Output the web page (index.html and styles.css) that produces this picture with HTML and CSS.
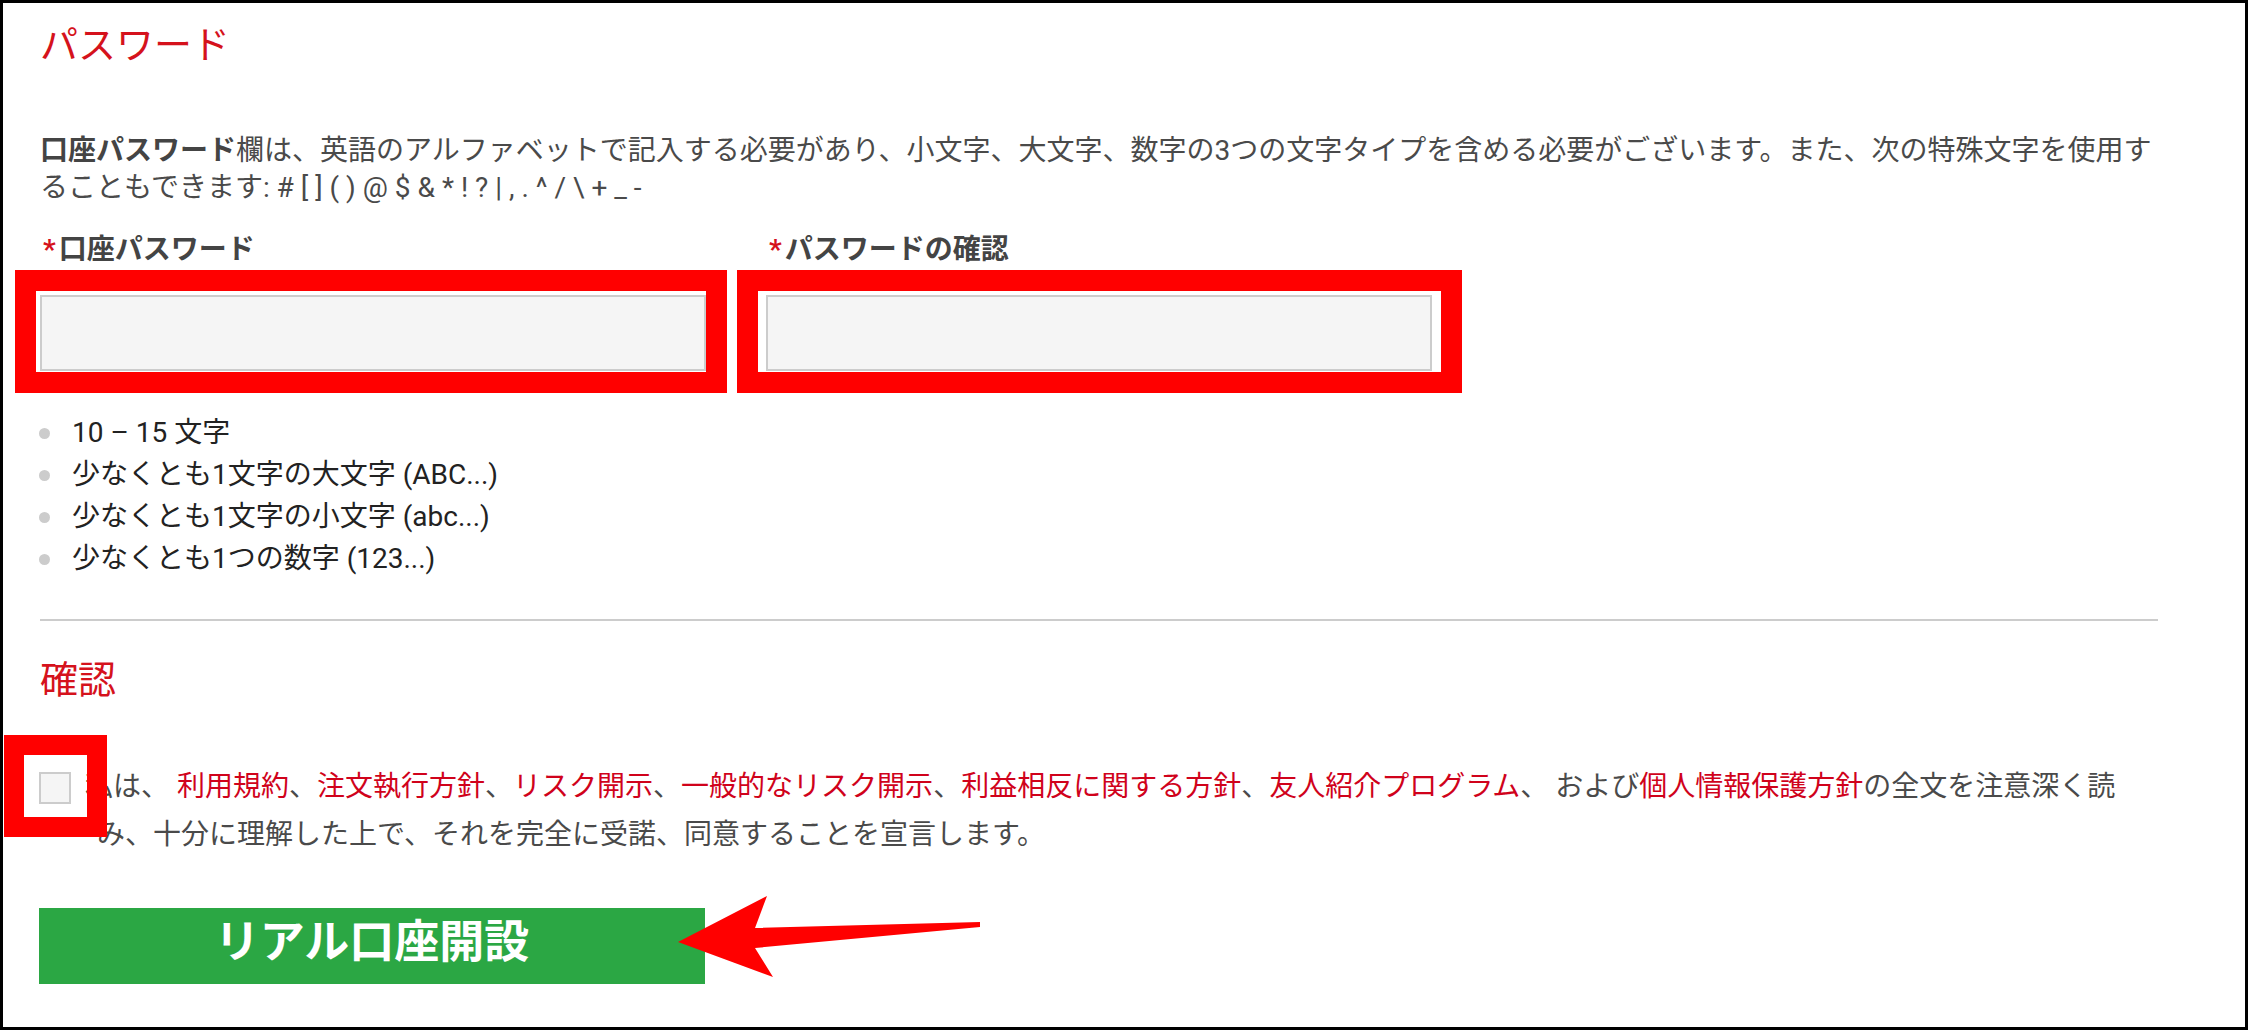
FILE: index.html
```html
<!DOCTYPE html>
<html lang="ja">
<head>
<meta charset="utf-8">
<title>パスワード</title>
<link rel="stylesheet" href="styles.css">
</head>
<body>
<main class="page">
  <h2 class="section-title">パスワード</h2>
  <p class="intro"><strong>口座パスワード</strong>欄は、英語のアルファベットで記入する必要があり、小文字、大文字、数字の3つの文字タイプを含める必要がございます。また、次の特殊文字を使用することもできます: # [ ] ( ) @ $ &amp; * ! ? | , . ^ / \ + _ -</p>

  <div class="fields">
    <div class="field">
      <label class="field-label"><span class="req">*</span>口座パスワード</label>
      <div class="input-wrap">
        <input type="password" class="pw">
        <span class="mark mark-pw1"></span>
      </div>
    </div>
    <div class="field">
      <label class="field-label"><span class="req">*</span>パスワードの確認</label>
      <div class="input-wrap">
        <input type="password" class="pw">
        <span class="mark mark-pw2"></span>
      </div>
    </div>
  </div>

  <ul class="rules">
    <li>10 – 15 文字</li>
    <li>少なくとも1文字の大文字 (ABC...)</li>
    <li>少なくとも1文字の小文字 (abc...)</li>
    <li>少なくとも1つの数字 (123...)</li>
  </ul>

  <hr class="divider">

  <h2 class="section-title confirm-title">確認</h2>

  <div class="agree">
    <div class="cb-wrap">
      <input type="checkbox" class="cb">
      <span class="mark mark-cb"></span>
    </div>
    <p class="agree-text"><span class="lead">私は、</span><a class="doc">利用規約</a>、<a class="doc">注文執行方針</a>、<a class="doc">リスク開示</a>、<a class="doc">一般的なリスク開示</a>、<a class="doc">利益相反に関する方針</a>、<a class="doc">友人紹介プログラム</a>、 および<a class="doc">個人情報保護方針</a>の全文を注意深く読み、十分に理解した上で、それを完全に受諾、同意することを宣言します。</p>
  </div>

  <div class="submit-row">
    <button class="submit" type="button">リアル口座開設</button>
    <svg class="arrow" width="320" height="100" viewBox="0 0 320 100" aria-hidden="true">
      <polygon points="8,54 97,8 85,40 310,34 310,39 85,60 103,89" fill="#ff0000"/>
    </svg>
  </div>
</main>
</body>
</html>
```

FILE: styles.css
```css
* {
  box-sizing: border-box;
}

html, body {
  margin: 0;
  padding: 0;
}

body {
  width: 2248px;
  height: 1030px;
  border: 3px solid #000;
  overflow: hidden;
  background: #fff;
  font-family: Roboto, "Noto Sans CJK JP", sans-serif;
  color: #4a4a4a;
}

.page {
  padding: 19px 87px 0 37px;
}

.section-title {
  margin: 0;
  font-size: 38px;
  line-height: 46px;
  font-weight: 400;
  color: #d5121c;
}

.intro {
  margin: 64px 0 0;
  font-size: 28px;
  line-height: 37px;
  color: #4a4a4a;
}

.intro strong {
  font-weight: 700;
  color: #444;
}

.fields {
  margin-top: 26px;
  display: grid;
  grid-template-columns: repeat(3, 666px);
  column-gap: 60px;
}

.field-label {
  display: block;
  font-size: 28px;
  line-height: 36px;
  font-weight: 700;
  color: #444;
  margin-bottom: 27px;
  padding-left: 3px;
}

.req {
  color: #d5121c;
  margin-right: 3px;
}

.input-wrap {
  position: relative;
}

.pw {
  display: block;
  width: 100%;
  height: 76px;
  margin: 0;
  border: 2px solid #cccccc;
  background: #f5f5f5;
  border-radius: 0;
}

.mark {
  position: absolute;
  border: 21px solid #ff0000;
  pointer-events: none;
}

.mark-pw1 {
  left: -25px;
  right: -21px;
  top: -25px;
  bottom: -22px;
}

.mark-pw2 {
  left: -29px;
  right: -30px;
  top: -25px;
  bottom: -22px;
}

.rules {
  list-style: none;
  margin: 41px 0 0;
  padding: 0;
  font-size: 28px;
  line-height: 42px;
  color: #222;
}

.rules li {
  display: flex;
  align-items: center;
}

.rules li::before {
  content: "";
  width: 11px;
  height: 11px;
  border-radius: 50%;
  background: #cccccc;
  margin-right: 22px;
  margin-left: -1px;
  flex: none;
}

.divider {
  margin: 39px 0 0;
  height: 0;
  border: 0;
  border-top: 2px solid #cccccc;
}

.confirm-title {
  margin-top: 36px;
}

.agree {
  margin-top: 60px;
  display: flex;
  align-items: flex-start;
}

.cb-wrap {
  position: relative;
  flex: none;
  width: 32px;
  height: 32px;
  margin-top: 9px;
  margin-left: -1px;
}

.cb {
  appearance: none;
  -webkit-appearance: none;
  display: block;
  width: 32px;
  height: 32px;
  margin: 0;
  border: 2px solid #cccccc;
  background: #f5f5f5;
  border-radius: 0;
}

.mark-cb {
  border-width: 20px;
  left: -35px;
  right: -36px;
  top: -37px;
  bottom: -33px;
}

.agree-text {
  margin: 0 0 0 26px;
  padding-right: 25px;
  text-indent: -12px;
  font-size: 28px;
  line-height: 48px;
  color: #4a4a4a;
  flex: 1;
}

.lead {
  margin-right: 8px;
}

.doc {
  color: #d0021b;
  text-decoration: none;
}

.submit-row {
  position: relative;
  margin-top: 49px;
  width: 666px;
}

.submit {
  display: block;
  width: 666px;
  height: 76px;
  margin: 0 0 0 -1px;
  padding: 0 0 6px;
  border: 0;
  border-radius: 0;
  background: #2ba744;
  color: #fff;
  font-family: Roboto, "Noto Sans CJK JP", sans-serif;
  font-size: 45px;
  font-weight: 700;
  line-height: 70px;
  text-align: center;
}

.arrow {
  position: absolute;
  left: 630px;
  top: -20px;
}
```
